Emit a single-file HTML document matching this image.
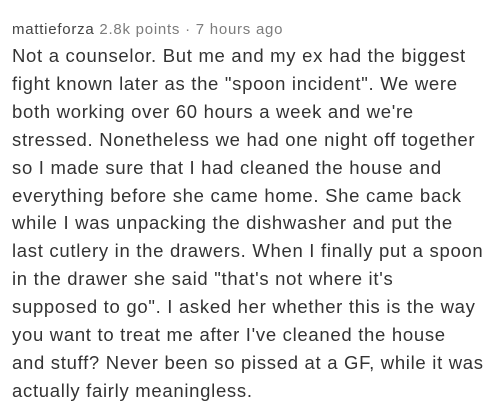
<!DOCTYPE html>
<html><head><meta charset="utf-8"><style>
html,body{margin:0;padding:0;background:#fff;width:492px;height:408px;overflow:hidden}
.h{position:absolute;left:12px;top:21px;font:15px "Liberation Sans",sans-serif;letter-spacing:0.75px;color:#7c7c7c;white-space:nowrap}
.h b{font-weight:normal;color:#444}
.t{position:absolute;left:12px;top:42px;font:18.5px/27.9px "Liberation Sans",sans-serif;letter-spacing:0.7px;color:#333;white-space:nowrap}
</style></head><body>
<div class="h"><b>mattieforza</b> 2.8k points · 7 hours ago</div>
<div class="t">Not a counselor. But me and my ex had the biggest<br>fight known later as the "spoon incident". We were<br>both working over 60 hours a week and we're<br>stressed. Nonetheless we had one night off together<br>so I made sure that I had cleaned the house and<br>everything before she came home. She came back<br>while I was unpacking the dishwasher and put the<br>last cutlery in the drawers. When I finally put a spoon<br>in the drawer she said "that's not where it's<br>supposed to go". I asked her whether this is the way<br>you want to treat me after I've cleaned the house<br>and stuff? Never been so pissed at a GF, while it was<br>actually fairly meaningless.</div>
</body></html>
